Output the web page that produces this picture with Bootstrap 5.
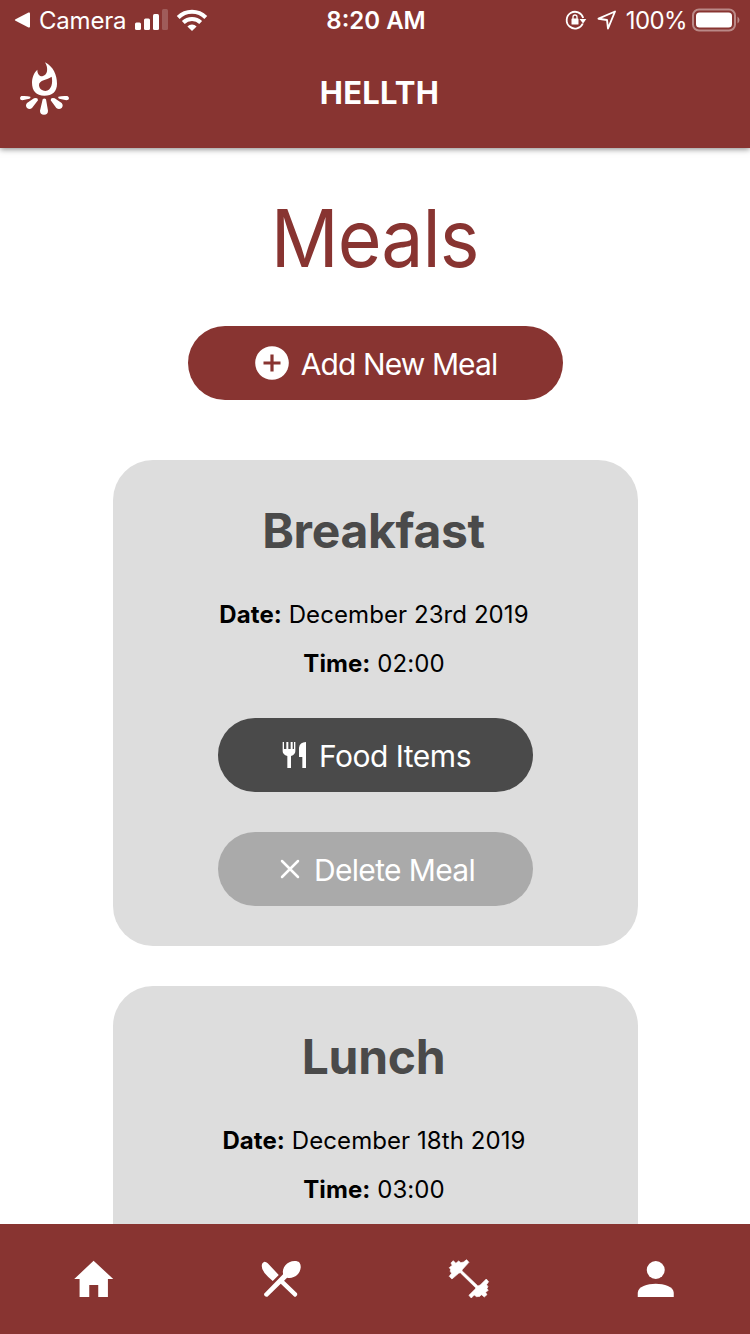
<!DOCTYPE html>
<html lang="en">
<head>
<meta charset="utf-8">
<meta name="viewport" content="width=device-width, initial-scale=1">
<title>Hellth</title>
<link href="https://cdn.jsdelivr.net/npm/bootstrap@5.3.0/dist/css/bootstrap.min.css" rel="stylesheet">
<style>
  :root { --brand: #883431; }
  body { font-family: Inter, "Liberation Sans", sans-serif; color: #000; height: 1334px; }
  main { min-height: 0; overflow: hidden; }
  svg { display: block; flex: none; }
  .app-header { background: var(--brand); height: 148px; box-shadow: 0 1px 6px rgba(0,0,0,.5); z-index: 2; }
  .status-bar { height: 40px; font-size: 24px; line-height: 40px; padding: 0 10px 0 14px; }
  .status-bar span, .clock { padding-top: 2px; }
  .status-side { flex: 1 1 0; }
  .clock { font-weight: 600; letter-spacing: 0; margin-left: -2px; }
  .camera-label { letter-spacing: -.2px; }
  .wifi { margin-left: 8px; }
  .location { margin-left: 10px; }
  .charge { margin-left: 9px; letter-spacing: -.6px; }
  .battery { margin-left: 5px; }
  .title-bar { height: 108px; display: grid; grid-template-columns: 80px 1fr 80px; }
  .brand-logo { margin: 10px 0 0 10px; }
  .brand-name { font-size: 31px; font-weight: 700; line-height: 106px; letter-spacing: .2px; padding-left: 9px; }
  .page-title { color: var(--brand); font-size: 80px; line-height: 96px; letter-spacing: -1px; margin: 42px 0 40px; transform: scaleX(.94); }
  .pill { height: 74px; border-radius: 37px; border: 0; padding: 0; color: #fff !important; font-size: 30px; line-height: 72px; }
  .pill span { padding-top: 2px; }
  .pill-add { width: 375px; background: var(--brand) !important; letter-spacing: -.9px; padding-left: 2px; }
  .pill-add span { margin-left: 12px; }
  .pill-items, .pill-delete { width: 315px; }
  .pill-items { background: #4a4a4a !important; letter-spacing: -.5px; padding-left: 3px; margin-top: 20px; }
  .pill-items span { margin-left: 11px; }
  .pill-delete { background: #aaa !important; letter-spacing: -.65px; padding-left: 5px; margin-top: 40px; }
  .pill-delete span { margin-left: 14px; }
  .meal { width: 525px; height: 486px; background: #ddd; border-radius: 40px; border: 0; padding-top: 41px; margin-top: 40px; }
  .pill-add + .meal { margin-top: 60px; }
  .meal h2 { color: #4a4a4a; font-size: 48px; font-weight: 700; line-height: 60px; letter-spacing: -.3px; margin: 0 0 39px; padding-right: 3px; }
  .meal p { font-size: 24px; line-height: 29px; letter-spacing: .08px; margin: 0 0 20px; padding-right: 2px; }
  .tab-bar { background: var(--brand); height: 110px; padding-top: 16px; }
</style>
</head>
<body class="bg-white overflow-hidden d-flex flex-column">
<header class="app-header text-white position-relative flex-shrink-0">
  <div class="status-bar d-flex align-items-center">
    <div class="status-side d-flex align-items-center">
      <svg width="17" height="16" viewBox="0 0 17 16"><path d="M1.500 7.200 14.500.6Q16 0 16 1.500v13q0 1.500-1.500.9L1.500 8.800Q0 8 1.500 7.200Z" fill="#fff"/></svg>
      <span class="camera-label ms-2">Camera</span>
      <svg class="ms-2" width="34" height="22" viewBox="0 0 34 22"><g fill="#fff"><rect x="1" y="13.500" width="6" height="7.500" rx="1.500"/><rect x="10" y="9.500" width="6" height="11.500" rx="1.500"/><rect x="19" y="5" width="6" height="16" rx="1.500"/><rect x="28" y="0" width="6" height="21" rx="1.500" opacity=".2"/></g></svg>
      <svg class="wifi" width="32" height="24" viewBox="0 0 32 24"><g fill="none" stroke="#fff" stroke-width="4"><path d="M2.200 9.500a19.500 19.500 0 0 1 27.600 0"/><path d="M7.300 14.500a12.300 12.300 0 0 1 17.400 0"/></g><path d="M16 23l-4.600-4.500a6.500 6.500 0 0 1 9.200 0Z" fill="#fff"/></svg>
    </div>
    <div class="clock">8:20 AM</div>
    <div class="status-side d-flex align-items-center justify-content-end">
      <svg width="22" height="22" viewBox="0 0 22 22"><path d="M17.800 14.500A8.400 8.400 0 1 1 18.200 9" fill="none" stroke="#fff" stroke-width="1.800"/><path d="M14.500 10h6.800l-3.200 4.600Z" fill="#fff"/><rect x="6.500" y="9.500" width="7" height="6" rx=".6" fill="#fff"/><path d="M8 10V8a2 2 0 0 1 4 0v2" fill="none" stroke="#fff" stroke-width="1.300"/></svg>
      <svg class="location" width="20" height="20" viewBox="0 0 20 20"><path d="M1.500 8.700 18 1.500 11 18.500 10 10Z" fill="none" stroke="#fff" stroke-width="1.900" stroke-linejoin="round"/></svg>
      <span class="charge">100%</span>
      <svg class="battery" width="48" height="24" viewBox="0 0 48 24"><rect x="1" y="1.500" width="42" height="21" rx="6" fill="none" stroke="#fff" stroke-width="2" opacity=".42"/><rect x="4" y="4.500" width="36" height="15" rx="3.500" fill="#fff"/><path d="M45.500 8.500q2 1.500 2 3.500t-2 3.500Z" fill="#fff" opacity=".42"/></svg>
    </div>
  </div>
  <div class="title-bar">
    <svg class="brand-logo" width="70" height="75" viewBox="0 0 210 225" fill="#fff"><path fill-rule="evenodd" d="M105 37C130 50 141 75 141 101C141 124 127 137 103 137C79 137 66 122 66 98C66 83 72 68 82 59C82 71 87 79 97 79C113 76 116 55 105 37ZM125 80C113 90 86 89 87 106C88 117 97 123 106 123C125 121 129 98 125 80Z"/><path d="M98 148Q103 143 108 148L114 182Q114 194 102 194Q90 194 90 182ZM72 145Q84 141 84 151L66 174Q59 180 51 174Q45 167 51 159ZM134 145Q122 141 122 151L139 174Q147 180 155 174Q161 167 155 159ZM34 138Q52 137 61 140Q63 144 58 146L37 151Q30 151 30 145Q30 140 34 138ZM172 138Q154 137 145 140Q143 144 148 146L169 151Q177 151 177 145Q177 140 172 138Z"/></svg>
    <div class="brand-name text-center">HELLTH</div>
  </div>
</header>
<main class="d-flex flex-column align-items-center flex-grow-1">
  <h1 class="page-title fw-normal">Meals</h1>
  <button class="btn pill pill-add d-flex justify-content-center align-items-center flex-shrink-0">
    <svg width="34" height="34" viewBox="0 0 34 34"><circle cx="17" cy="17" r="16.800" fill="#fff"/><path d="M17 8.500v17M8.500 17h17" stroke="#883431" stroke-width="3.200"/></svg>
    <span>Add New Meal</span>
  </button>
  <section class="card meal align-items-center flex-shrink-0">
    <h2>Breakfast</h2>
    <p><b>Date:</b> December 23rd 2019</p>
    <p><b>Time:</b> 02:00</p>
    <button class="btn pill pill-items d-flex justify-content-center align-items-center">
      <svg width="26" height="28" viewBox="0 0 78 84" fill="#fff"><path d="M2 3h4v21h7V3h6v21h7V3h6v21h4V3h4v28q0 10-13 14v36H16V45Q2 41 2 31Z"/><path d="M72 3v78H61V48h-10V20Q53 4 72 3Z"/></svg>
      <span>Food Items</span>
    </button>
    <button class="btn pill pill-delete d-flex justify-content-center align-items-center">
      <svg width="20" height="20" viewBox="0 0 20 20"><path d="M2 2l16 16M18 2 2 18" stroke="#fff" stroke-width="2.500" stroke-linecap="round"/></svg>
      <span>Delete Meal</span>
    </button>
  </section>
  <section class="card meal align-items-center flex-shrink-0">
    <h2>Lunch</h2>
    <p><b>Date:</b> December 18th 2019</p>
    <p><b>Time:</b> 03:00</p>
  </section>
</main>
<nav class="tab-bar fixed-bottom">
  <div class="row g-0">
    <a class="col d-flex justify-content-center" href="#" aria-label="Home"><svg width="70" height="80" viewBox="-3.750 0 210 240" fill="#fff"><path d="M100 62 159 117H143V171H114V135H87V171H58V117H42Z"/></svg></a>
    <a class="col d-flex justify-content-center" href="#" aria-label="Meals"><svg width="70" height="80" viewBox="3.750 0 210 240" fill="#fff"><path d="M59 65Q65 65 69 70L102 105 84 123Q50 95 51 78Q51 68 59 65Z"/><path d="M115 103C111 83 126 63 150 63C163 63 168 69 168 82C166 105 147 117 127 113L118 122 157 160Q160 166 153 170L149 170 108 131 68 170Q61 172 58 165L58 161Z"/></svg></a>
    <a class="col d-flex justify-content-center" href="#" aria-label="Workouts"><svg width="70" height="80" viewBox="-3.750 0 210 240" fill="#fff"><path d="M54 62 62 70 70 63 77 68 85 66 94 59 101 67 82 88 80 92 128 138 135 135 153 117 160 125 154 134 158 140 155 146 159 151 151 157 155 164 147 171 139 164 134 169 124 170 117 165 108 174 101 166 120 147 122 144 75 98 70 100 50 117 42 109 49 100 45 94 46 88 42 83 51 76 47 69Z" stroke="#fff" stroke-width="2" stroke-linejoin="round"/></svg></a>
    <a class="col d-flex justify-content-center" href="#" aria-label="Profile"><svg width="70" height="80" viewBox="3.750 0 210 240" fill="#fff"><circle cx="108" cy="90" r="27"/><path d="M54 171V158C54 140 83 131 108 131S162 140 162 158V171Z"/></svg></a>
  </div>
</nav>
<script src="https://cdn.jsdelivr.net/npm/bootstrap@5.3.0/dist/js/bootstrap.bundle.min.js"></script>
</body>
</html>
